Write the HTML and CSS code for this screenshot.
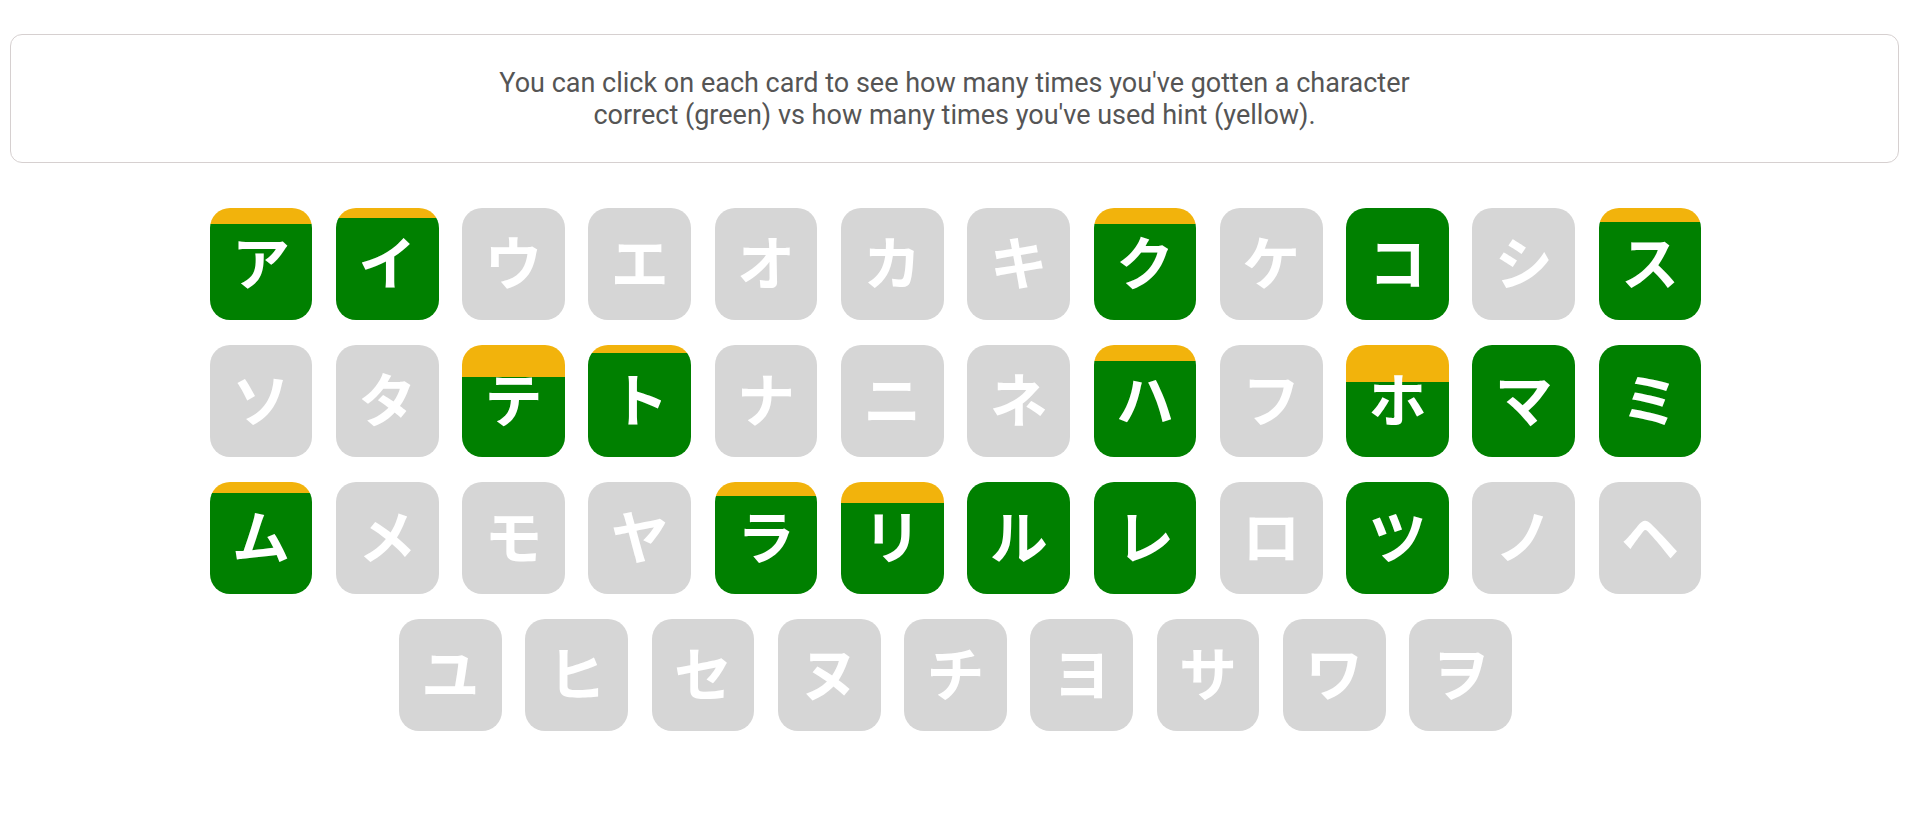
FILE: index.html
```html
<!DOCTYPE html>
<html lang="en">
<head>
<meta charset="utf-8">
<title>Katakana progress</title>
<link rel="stylesheet" href="styles.css">
</head>
<body>
<div class="info">
  <p class="info-text">You can click on each card to see how many times you've gotten a character correct (green) vs how many times you've used hint (yellow).</p>
</div>
<div class="cards">
  <div class="card done" style="--h:16px"><span>ア</span></div>
  <div class="card done" style="--h:10px"><span>イ</span></div>
  <div class="card"><span>ウ</span></div>
  <div class="card"><span>エ</span></div>
  <div class="card"><span>オ</span></div>
  <div class="card"><span>カ</span></div>
  <div class="card"><span>キ</span></div>
  <div class="card done" style="--h:16px"><span>ク</span></div>
  <div class="card"><span>ケ</span></div>
  <div class="card done" style="--h:0px"><span>コ</span></div>
  <div class="card"><span>シ</span></div>
  <div class="card done" style="--h:14px"><span>ス</span></div>

  <div class="card"><span>ソ</span></div>
  <div class="card"><span>タ</span></div>
  <div class="card done" style="--h:32px"><span>テ</span></div>
  <div class="card done" style="--h:8px"><span>ト</span></div>
  <div class="card"><span>ナ</span></div>
  <div class="card"><span>ニ</span></div>
  <div class="card"><span>ネ</span></div>
  <div class="card done" style="--h:16px"><span>ハ</span></div>
  <div class="card"><span>フ</span></div>
  <div class="card done" style="--h:37px"><span>ホ</span></div>
  <div class="card done" style="--h:0px"><span>マ</span></div>
  <div class="card done" style="--h:0px"><span>ミ</span></div>

  <div class="card done" style="--h:11px"><span>ム</span></div>
  <div class="card"><span>メ</span></div>
  <div class="card"><span>モ</span></div>
  <div class="card"><span>ヤ</span></div>
  <div class="card done" style="--h:14px"><span>ラ</span></div>
  <div class="card done" style="--h:21px"><span>リ</span></div>
  <div class="card done" style="--h:0px"><span>ル</span></div>
  <div class="card done" style="--h:0px"><span>レ</span></div>
  <div class="card"><span>ロ</span></div>
  <div class="card done" style="--h:0px"><span>ツ</span></div>
  <div class="card"><span>ノ</span></div>
  <div class="card"><span>ヘ</span></div>

  <div class="card"><span>ユ</span></div>
  <div class="card"><span>ヒ</span></div>
  <div class="card"><span>セ</span></div>
  <div class="card"><span>ヌ</span></div>
  <div class="card"><span>チ</span></div>
  <div class="card"><span>ヨ</span></div>
  <div class="card"><span>サ</span></div>
  <div class="card"><span>ワ</span></div>
  <div class="card"><span>ヲ</span></div>
</div>
</body>
</html>
```
FILE: styles.css
```css
html, body {
  background: #ffffff;
}

body {
  margin: 0;
  font-family: Roboto, "Noto Sans", sans-serif;
}

.info {
  margin: 34px 9px 0 10px;
  height: 129px;
  box-sizing: border-box;
  border: 1px solid #d6d0d0;
  border-radius: 12px;
  display: flex;
  align-items: center;
  justify-content: center;
}

.info-text {
  margin: 0;
  max-width: 960px;
  text-align: center;
  font-size: 27px;
  line-height: 32px;
  color: #555555;
}

.cards {
  width: 1493px;
  margin: 45px 0 0 209px;
  display: flex;
  flex-wrap: wrap;
  justify-content: center;
  column-gap: 23.6px;
  row-gap: 25.4px;
}

.card {
  width: 102.7px;
  height: 111.7px;
  border-radius: 20px;
  background: #d6d6d6;
  display: flex;
  justify-content: center;
  padding-top: 22px;
  box-sizing: border-box;
}

.card.done {
  background: linear-gradient(to bottom, #f2b30c 0, #f2b30c var(--h), #008000 var(--h), #008000 100%);
}

.card span {
  font-family: "Noto Sans CJK JP", sans-serif;
  font-weight: 700;
  font-size: 58px;
  line-height: 60px;
  color: #ffffff;
}
```
